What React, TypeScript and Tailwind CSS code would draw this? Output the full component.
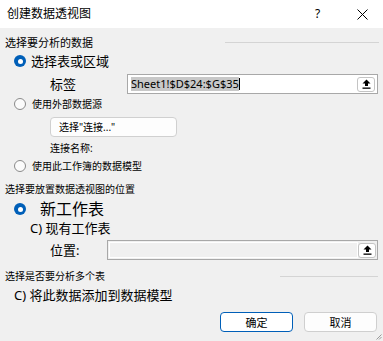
import React from "react";

const Radio = ({ checked }: { checked?: boolean }) =>
  checked ? (
    <span className="w-[12px] h-[12px] rounded-full bg-[#005fb8] flex items-center justify-center shrink-0">
      <span className="w-[5px] h-[5px] rounded-full bg-white" />
    </span>
  ) : (
    <span className="w-[12px] h-[12px] rounded-full bg-[#fbfbfb] border border-[#8a8a8a] shrink-0" />
  );

const UploadBtn = () => (
  <span className="w-[18px] h-[15px] rounded-[3px] border border-[#c4c4c4] bg-white flex items-center justify-center shrink-0">
    <svg width="9" height="10" viewBox="0 0 9 10" aria-hidden="true">
      <path d="M4.5 0.5 L8.5 4.5 L6 4.5 L6 7 L3 7 L3 4.5 L0.5 4.5 Z" fill="#000" />
      <rect x="0.5" y="8.5" width="8" height="1.3" fill="#000" />
    </svg>
  </span>
);

export default function App() {
  return (
    <div className="relative w-[383px] h-[341px] bg-[#f0f0f0] overflow-hidden text-black font-['Noto_Sans','Noto_Sans_CJK_SC',sans-serif] leading-none">
      {/* Title bar */}
      <div className="h-[28px] bg-white flex items-center pl-[7px]">
        <span className="text-[12px] flex-1">创建数据透视图</span>
        <span className="text-[12px] w-[10px] mr-[32px]">?</span>
        <svg width="11" height="11" viewBox="0 0 11 11" className="mr-[15px]" aria-hidden="true">
          <path d="M0.5 0.5 L10.5 10.5 M10.5 0.5 L0.5 10.5" stroke="#000" strokeWidth="1" />
        </svg>
      </div>

      <div className="flex flex-col">
        {/* Section 1 heading */}
        <div className="mt-[6px] h-[16px] flex items-center pl-[5px] pr-[4px]">
          <span className="text-[11px]">选择要分析的数据</span>
          <span className="ml-auto w-[154px] h-px bg-[#d4d4d4]" />
        </div>

        <div className="mt-[3px] h-[16px] flex items-center pl-[14px] gap-[5px]">
          <Radio checked />
          <span className="text-[13px]">选择表或区域</span>
        </div>

        <div className="mt-[5px] h-[20px] flex items-center pl-[50px] pr-[5px]">
          <span className="text-[13px] w-[77px]">标签</span>
          <div className="flex-1 h-[20px] border border-[#a8a8a8] bg-white flex items-center pl-[3px] pr-[2px]">
            <span className="text-[11px] bg-[#c8c8c8] py-[1px] leading-[12px]">Sheet1!$D$24:$G$35</span>
            <span className="w-px h-[12px] bg-black" />
            <span className="ml-auto">
              <UploadBtn />
            </span>
          </div>
        </div>

        <div className="mt-[2px] h-[16px] flex items-center pl-[14px] gap-[6px]">
          <Radio />
          <span className="text-[10px]">使用外部数据源</span>
        </div>

        <div className="mt-[5px] pl-[50px]">
          <div className="w-[127px] h-[20px] rounded-[4px] border border-[#d0d0d0] bg-[#fdfdfd] flex items-center pl-[8px]">
            <span className="text-[10px]">选择"连接..."</span>
          </div>
        </div>

        <div className="mt-[3px] h-[16px] flex items-center pl-[50px]">
          <span className="text-[10px]">连接名称:</span>
        </div>

        <div className="mt-[2px] h-[16px] flex items-center pl-[14px] gap-[6px]">
          <Radio />
          <span className="text-[10px]">使用此工作簿的数据模型</span>
        </div>

        {/* Section 2 heading */}
        <div className="mt-[7px] h-[16px] flex items-center pl-[5px]">
          <span className="text-[10px]">选择要放置数据透视图的位置</span>
        </div>

        <div className="mt-[4px] h-[16px] flex items-center pl-[14px] gap-[14px]">
          <Radio checked />
          <span className="text-[16px]">新工作表</span>
        </div>

        <div className="mt-[3px] h-[16px] flex items-center pl-[30px]">
          <span className="text-[13px]">C) 现有工作表</span>
        </div>

        <div className="mt-[4px] h-[20px] flex items-center pl-[50px] pr-[5px]">
          <span className="text-[13px] w-[57px]">位置:</span>
          <div className="flex-1 h-[20px] border border-[#a8a8a8] bg-[#f0f0f0] flex items-center p-px">
            <span className="flex-1 h-full bg-[#f0f0f0] border border-white" />
            <UploadBtn />
          </div>
        </div>

        {/* Section 3 heading */}
        <div className="mt-[8px] h-[16px] flex items-center pl-[5px] pr-[5px]">
          <span className="text-[10px]">选择是否要分析多个表</span>
          <span className="ml-auto w-[98px] h-px bg-[#d4d4d4]" />
        </div>

        <div className="mt-[3px] h-[16px] flex items-center pl-[14px]">
          <span className="text-[13px]">C) 将此数据添加到数据模型</span>
        </div>

        <div className="mt-[9px] flex justify-end gap-[11px] pr-[6px]">
          <button className="w-[73px] h-[20px] rounded-[4px] border border-[#005fb8] bg-white text-[11px] flex items-center justify-center">
            确定
          </button>
          <button className="w-[73px] h-[20px] rounded-[4px] border border-[#cfcfcf] bg-[#fdfdfd] text-[11px] flex items-center justify-center">
            取消
          </button>
        </div>
      </div>

      {/* Resize grip */}
      <svg width="6" height="6" viewBox="0 0 6 6" className="absolute right-[1px] bottom-[1px]" aria-hidden="true">
        <path d="M5.5 0.5 L0.5 5.5 M5.5 3 L3 5.5" stroke="#9a9a9a" strokeWidth="1" />
      </svg>
    </div>
  );
}
